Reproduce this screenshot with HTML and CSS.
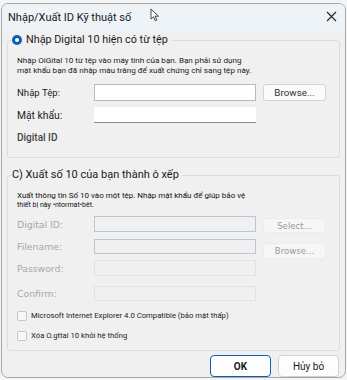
FILE: index.html
```html
<!DOCTYPE html>
<html lang="vi">
<head>
<meta charset="utf-8">
<title>Nhập/Xuất ID Kỹ thuật số</title>
<link rel="stylesheet" href="styles.css">
</head>
<body>
<div class="dialog">
  <div class="titlebar">
    <span class="title">Nhập/Xuất ID Kỹ thuật số</span>
    <svg class="close" width="11" height="11" viewBox="0 0 11 11"><path d="M1 1L10 10M10 1L1 10" stroke="#222" stroke-width="1.1" fill="none"/></svg>
    <svg class="cursor" width="10" height="14" viewBox="0 0 10 14"><path d="M1 1L1 11L3.5 8.8L5.3 12.8L6.8 12.1L5.1 8.2L8.5 8.2Z" fill="#fff" stroke="#333" stroke-width="0.9" stroke-linejoin="round"/></svg>
  </div>
  <div class="content">
    <fieldset class="group g1">
      <legend class="legend"><span class="radio"></span>Nhập Digital 10 hiện có từ tệp</legend>
      <p class="desc">Nhập OiGital 10 từ tệp vào máy tính của bạn. Bạn phải sử dụng<br>mật khẩu bạn đã nhập màu trắng để xuất chứng chỉ sang tệp này.</p>
      <div class="row r-file">
        <span class="lbl small">Nhập Tệp:</span>
        <span class="input white bordered"></span>
        <span class="btn">Browse...</span>
      </div>
      <div class="row r-pass">
        <span class="lbl">Mật khẩu:</span>
        <span class="input white underline"></span>
      </div>
      <div class="dig">Digital ID</div>
    </fieldset>
    <fieldset class="group g2">
      <legend class="legend2">C) Xuất số 10 của bạn thành ô xếp</legend>
      <p class="desc2">Xuất thông tin Số 10 vào một tệp. Nhập mật khẩu để giúp bảo vệ<br><span class="tiny">thiết bị này •ntormat•bêt.</span></p>
      <div class="row r-did">
        <span class="lbl dis">Digital ID:</span>
        <span class="input blue"></span>
        <span class="btn disbtn b-sel">Select...</span>
      </div>
      <div class="row r-fn">
        <span class="lbl dis">Filename:</span>
        <span class="input blue"></span>
        <span class="btn disbtn b-br">Browse...</span>
      </div>
      <div class="row r-pw">
        <span class="lbl dis">Password:</span>
        <span class="input faint"></span>
      </div>
      <div class="row r-cf">
        <span class="lbl dis">Confirm:</span>
        <span class="input faint"></span>
      </div>
      <div class="check c1"><span class="box"></span><span class="ctext">Microsoft Internet Explorer 4.0 Compatible (bảo mật thấp)</span></div>
      <div class="check c2"><span class="box"></span><span class="ctext">Xóa O.gttal 10 khỏi hệ thống</span></div>
    </fieldset>
    <div class="actions">
      <span class="abtn ok">OK</span>
      <span class="abtn">Hủy bỏ</span>
    </div>
  </div>
</div>
</body>
</html>
```
FILE: styles.css
```css
html, body {
  margin: 0;
  padding: 0;
  background: #f4f4f4;
  font-family: Roboto, "Noto Sans", sans-serif;
  color: #1a1a1a;
}
.dialog {
  margin: 3px 0 0 1px;
  width: 345px;
  height: 375px;
  border: 1px solid #a8a8a8;
  border-radius: 7px;
  overflow: hidden;
  background: #f0f0f0;
  box-sizing: border-box;
}
.titlebar {
  position: relative;
  height: 27px;
  background: #eef3f8;
  display: flex;
  align-items: center;
  padding-left: 6px;
}
.title {
  font-size: 11px;
  color: #1a1a1a;
}
.close {
  position: absolute;
  right: 8px;
  top: 7px;
}
.cursor {
  position: absolute;
  left: 148px;
  top: 4px;
}
.content {
  padding: 0 5px 0 5px;
}
.group {
  margin: 0;
  border: 1px solid #dcdcdc;
  border-radius: 3px;
  padding: 0 0 0 9px;
  box-sizing: border-box;
  min-width: 0;
}
.g1 {
  margin-top: 2px;
  height: 125px;
}
.legend {
  display: flex;
  align-items: center;
  font-size: 10.8px;
  padding: 0 4px 0 0;
  margin-left: -5px;
  line-height: 14px;
}
.radio {
  width: 10px;
  height: 10px;
  border-radius: 50%;
  background: #0a5fb4;
  margin-right: 4px;
  position: relative;
}
.radio::after {
  content: "";
  position: absolute;
  left: 3px;
  top: 3px;
  width: 4px;
  height: 4px;
  background: #fff;
  border-radius: 50%;
}
.desc {
  margin: 8px 0 0 0;
  font-size: 8.1px;
  line-height: 10px;
  color: #222;
}
.row {
  display: grid;
  grid-template-columns: 70px 162px 63px;
  column-gap: 7px;
  align-items: start;
}
.r-file { margin-top: 9px; grid-template-rows: 17px; }
.r-pass { margin-top: 6px; grid-template-rows: 16px; }
.lbl {
  font-size: 10.3px;
  color: #222;
  align-self: center;
  white-space: nowrap;
}
.lbl.small { font-size: 9.6px; }
.input {
  box-sizing: border-box;
  height: 100%;
  display: block;
}
.white { background: #fff; }
.bordered { border: 1px solid #b9b9b9; }
.underline { border-bottom: 1px solid #8c8c8c; }
.btn {
  box-sizing: border-box;
  height: 17px;
  border: 1px solid #d4d4d4;
  border-radius: 3px;
  background: #fbfbfb;
  font-size: 9.8px;
  color: #333;
  display: flex;
  align-items: center;
  justify-content: center;
}
.dig {
  margin-top: 8px;
  line-height: 13px;
  font-size: 10px;
  font-weight: 500;
  color: #444;
}
.g2 {
  margin-top: 10px;
  height: 183px;
}
.legend2 {
  font-size: 11px;
  padding: 0 3px 0 0;
  margin-left: -5px;
  line-height: 14px;
  color: #1a1a1a;
}
.desc2 {
  margin: 9px 0 0 0;
  font-size: 8px;
  line-height: 9px;
  color: #111;
}
.tiny { font-size: 7px; }
.dis {
  font-family: "DejaVu Sans", sans-serif;
  font-size: 9.3px;
  color: #a8a8a8;
}
.blue { border: 1px solid #b8c6d8; background: #f0f0f0; }
.faint { border: 1px solid #e3e3e3; background: #f0f0f0; }
.disbtn {
  color: #9a9a9a;
  border-color: #ececec;
  background: #f6f6f6;
  font-family: "DejaVu Sans", sans-serif;
  font-size: 8.6px;
}
.r-did { margin-top: 6px; grid-template-rows: 16px; }
.b-sel { margin-top: 2px; height: 15px; }
.r-fn { margin-top: 7px; grid-template-rows: 15px; }
.b-br { margin-top: 4px; height: 16px; }
.r-pw { margin-top: 6px; grid-template-rows: 16px; }
.r-cf { margin-top: 10px; grid-template-rows: 15px; }
.check {
  display: flex;
  align-items: center;
  gap: 4px;
  height: 11px;
}
.c1 { margin-top: 9px; }
.c2 { margin-top: 9px; }
.box {
  width: 10px;
  height: 10px;
  box-sizing: border-box;
  border: 1px solid #c8c8c8;
  border-radius: 2px;
  background: #f7f7f7;
}
.ctext {
  font-size: 7.7px;
  color: #222;
  white-space: nowrap;
}
.actions {
  display: flex;
  justify-content: flex-end;
  gap: 7px;
  margin-top: 4px;
  padding-right: 1px;
}
.abtn {
  width: 61px;
  height: 22px;
  box-sizing: border-box;
  border: 1px solid #d0d0d0;
  border-radius: 4px;
  background: #fdfdfd;
  display: flex;
  align-items: center;
  justify-content: center;
  font-size: 10px;
  color: #1a1a1a;
}
.ok {
  border: 1.5px solid #0a5fb4;
  font-weight: 700;
}
```
